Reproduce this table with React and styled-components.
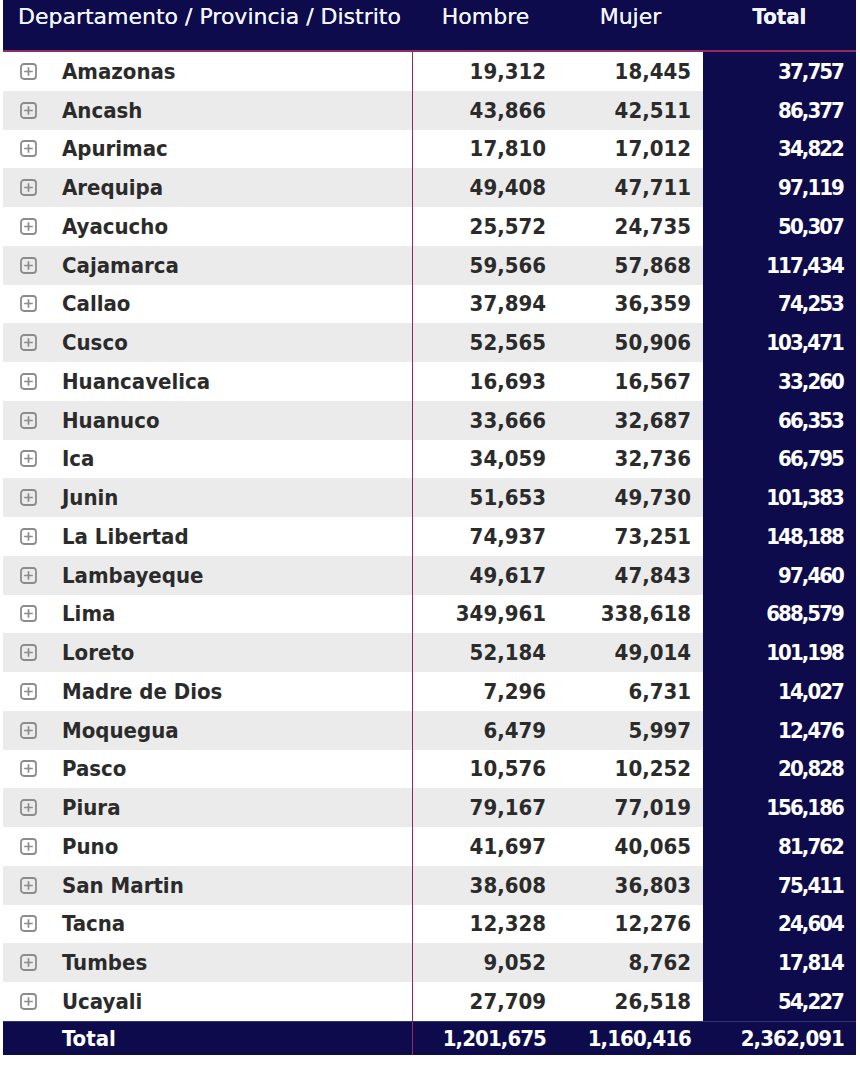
import React from "react";
import styled, { createGlobalStyle } from "styled-components";

const GlobalStyle = createGlobalStyle`
  html, body { margin: 0; padding: 0; background: #ffffff; }
  body { font-family: "DejaVu Sans Condensed", "DejaVu Sans", sans-serif; }
`;

const NAVY = "#0d0b4c";
const MAROON = "#8e2d5c";

const data = [
  ["Amazonas", "19,312", "18,445", "37,757"],
  ["Ancash", "43,866", "42,511", "86,377"],
  ["Apurimac", "17,810", "17,012", "34,822"],
  ["Arequipa", "49,408", "47,711", "97,119"],
  ["Ayacucho", "25,572", "24,735", "50,307"],
  ["Cajamarca", "59,566", "57,868", "117,434"],
  ["Callao", "37,894", "36,359", "74,253"],
  ["Cusco", "52,565", "50,906", "103,471"],
  ["Huancavelica", "16,693", "16,567", "33,260"],
  ["Huanuco", "33,666", "32,687", "66,353"],
  ["Ica", "34,059", "32,736", "66,795"],
  ["Junin", "51,653", "49,730", "101,383"],
  ["La Libertad", "74,937", "73,251", "148,188"],
  ["Lambayeque", "49,617", "47,843", "97,460"],
  ["Lima", "349,961", "338,618", "688,579"],
  ["Loreto", "52,184", "49,014", "101,198"],
  ["Madre de Dios", "7,296", "6,731", "14,027"],
  ["Moquegua", "6,479", "5,997", "12,476"],
  ["Pasco", "10,576", "10,252", "20,828"],
  ["Piura", "79,167", "77,019", "156,186"],
  ["Puno", "41,697", "40,065", "81,762"],
  ["San Martin", "38,608", "36,803", "75,411"],
  ["Tacna", "12,328", "12,276", "24,604"],
  ["Tumbes", "9,052", "8,762", "17,814"],
  ["Ucayali", "27,709", "26,518", "54,227"],
];

const Table = styled.div`
  margin-left: 3px;
  width: 853px;
  display: grid;
  grid-template-columns: 410px 145px 145px 153px;
`;

const HeaderRow = styled.div`
  display: contents;
`;

const HeaderCell = styled.div`
  background: ${NAVY};
  height: 52px;
  box-sizing: border-box;
  border-bottom: 2px solid ${MAROON};
  color: #f2f5ff;
  font-family: ${(p) =>
    p.$bold
      ? `"DejaVu Sans Condensed", "DejaVu Sans", sans-serif`
      : `"DejaVu Sans", sans-serif`};
  font-size: 22px;
  font-weight: ${(p) => (p.$bold ? 700 : 400)};
  line-height: 26px;
  padding: 4px 0 0 ${(p) => (p.$left ? "15px" : "0")};
  text-align: ${(p) => (p.$left ? "left" : "center")};
  white-space: nowrap;
  text-shadow: 0 0 0.5px #f2f5ff;
`;

const Row = styled.div`
  display: contents;
`;

const BaseCell = styled.div`
  height: 38.76px;
  box-sizing: border-box;
  display: flex;
  align-items: center;
  font-size: 22px;
  font-weight: 700;
  color: #2b2b2b;
  white-space: nowrap;
  background: ${(p) => (p.$striped ? "#ebebeb" : "#ffffff")};
`;

const NameCell = styled(BaseCell)`
  padding-left: 17px;
  border-right: 1.5px solid ${MAROON};
`;

const NameText = styled.span`
  margin-left: 25px;
`;

const NumCell = styled(BaseCell)`
  justify-content: flex-end;
  padding-right: 12px;
`;

const TotalCell = styled(BaseCell)`
  justify-content: flex-end;
  padding-right: 13px;
  background: ${NAVY};
  color: #ffffff;
  letter-spacing: -1.9px;
`;

const FooterCell = styled.div`
  height: 34px;
  box-sizing: border-box;
  background: ${NAVY};
  border-top: 1px solid #34347a;
  color: #ffffff;
  font-size: 22px;
  font-weight: 700;
  display: flex;
  align-items: center;
  white-space: nowrap;
  letter-spacing: ${(p) => (p.$left ? "0" : "-0.9px")};
  justify-content: ${(p) => (p.$left ? "flex-start" : "flex-end")};
  padding: ${(p) => (p.$left ? "0 0 0 59px" : "0 12px 0 0")};
  ${(p) => (p.$left ? `border-right: 1.5px solid ${MAROON};` : "")}
`;

const ExpandIcon = () => (
  <svg width="17" height="17" viewBox="0 0 17 17" aria-hidden="true">
    <rect x="1" y="1" width="15" height="15" rx="3" fill="none" stroke="#8c8c8c" strokeWidth="1.8" />
    <path d="M8.5 4.2V12.8M4.2 8.5H12.8" stroke="#8c8c8c" strokeWidth="1.7" />
  </svg>
);

export default function App() {
  return (
    <>
      <GlobalStyle />
      <Table>
        <HeaderRow>
          <HeaderCell $left>Departamento / Provincia / Distrito</HeaderCell>
          <HeaderCell>Hombre</HeaderCell>
          <HeaderCell>Mujer</HeaderCell>
          <HeaderCell $bold>Total</HeaderCell>
        </HeaderRow>
        {data.map(([name, h, m, t], i) => {
          const striped = i % 2 === 1;
          return (
            <Row key={name}>
              <NameCell $striped={striped}>
                <ExpandIcon />
                <NameText>{name}</NameText>
              </NameCell>
              <NumCell $striped={striped}>{h}</NumCell>
              <NumCell $striped={striped}>{m}</NumCell>
              <TotalCell>{t}</TotalCell>
            </Row>
          );
        })}
        <Row>
          <FooterCell $left>Total</FooterCell>
          <FooterCell>1,201,675</FooterCell>
          <FooterCell>1,160,416</FooterCell>
          <FooterCell>2,362,091</FooterCell>
        </Row>
      </Table>
    </>
  );
}
